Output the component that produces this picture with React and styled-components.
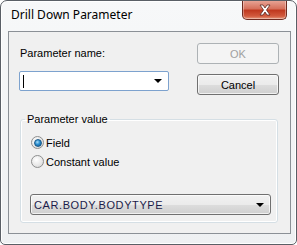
import styled, { createGlobalStyle } from 'styled-components';

const Global = createGlobalStyle`
  html, body {
    margin: 0;
    padding: 0;
    background: #ffffff;
  }
  * { box-sizing: border-box; }
`;

const Window = styled.div`
  width: 297px;
  height: 245px;
  border: 1px solid #5a5f66;
  border-radius: 7px 7px 5px 5px;
  background: linear-gradient(#f7f8f9, #eef0f2);
  box-shadow: inset 0 0 0 1px #ffffff;
  display: flex;
  flex-direction: column;
  padding: 0 6px 0 7px;
  overflow: hidden;
`;

const TitleBar = styled.div`
  height: 30px;
  display: flex;
  justify-content: space-between;
  align-items: flex-start;
`;

const Title = styled.div`
  font-family: "Noto Sans", "Open Sans", sans-serif;
  font-size: 12px;
  color: #000;
  padding: 5px 0 0 3px;
`;

const CloseButton = styled.div`
  width: 45px;
  height: 20px;
  margin-top: -1px;
  margin-right: 3px;
  border: 1px solid #6e2b20;
  border-top: none;
  border-radius: 0 0 5px 5px;
  background: linear-gradient(#e9a99b 0%, #d6715d 45%, #c0391f 55%, #d25a3d 85%, #e69a7e 100%);
  box-shadow: inset 0 0 0 1px rgba(255, 255, 255, 0.35);
  display: flex;
  align-items: center;
  justify-content: center;
`;

const Client = styled.div`
  width: 283px;
  height: 203px;
  border: 1px solid #8b9096;
  background: #f0f0f0;
  display: flex;
  flex-direction: column;
`;

const TopRow = styled.div`
  display: flex;
  justify-content: space-between;
  padding: 11px 11px 0 10px;
`;

const LeftCol = styled.div`
  display: flex;
  flex-direction: column;
  padding-top: 3px;
  gap: 10px;
`;

const RightCol = styled.div`
  display: flex;
  flex-direction: column;
  gap: 10px;
`;

const Label = styled.div`
  font-family: "Liberation Sans", Arial, sans-serif;
  font-size: 11px;
  line-height: 15px;
  color: #000;
  padding-left: 1px;
`;

const Combo = styled.div`
  width: 150px;
  height: 20px;
  border: 1px solid #7da2ce;
  border-radius: 2px;
  background: #fff;
  display: flex;
  align-items: center;
  justify-content: space-between;
  padding: 0 6px 0 3px;
`;

const Caret = styled.div`
  width: 1px;
  height: 13px;
  background: #000;
`;

const Arrow = styled.div`
  width: 0;
  height: 0;
  border-left: 4px solid transparent;
  border-right: 4px solid transparent;
  border-top: 4px solid #000;
`;

const Button = styled.div`
  width: 82px;
  height: 21px;
  border-radius: 3px;
  display: flex;
  align-items: center;
  justify-content: center;
  font-family: "Liberation Sans", Arial, sans-serif;
  font-size: 11px;
  border: 1px solid ${p => (p.$disabled ? '#adb2b5' : '#707070')};
  color: ${p => (p.$disabled ? '#a0a0a0' : '#000')};
  background: ${p =>
    p.$disabled
      ? '#f4f4f4'
      : 'linear-gradient(#f2f2f2 0%, #ebebeb 50%, #dddddd 51%, #cfcfcf 100%)'};
  box-shadow: ${p => (p.$disabled ? 'none' : 'inset 0 0 0 1px rgba(255,255,255,0.7)')};
`;

const Group = styled.fieldset`
  margin: 17px 0 0 11px;
  width: 258px;
  padding: 6px 0 7px 10px;
  border: 1px solid #d5dfe5;
  border-radius: 3px;
  box-shadow: inset 0 0 0 1px #ffffff;
`;

const Legend = styled.legend`
  font-family: "Liberation Sans", Arial, sans-serif;
  font-size: 11px;
  line-height: 15px;
  color: #000;
  padding: 0 2px;
  margin-left: -6px;
`;

const RadioRow = styled.div`
  height: 19px;
  display: flex;
  align-items: center;
  gap: 2px;
  font-family: "Liberation Sans", Arial, sans-serif;
  font-size: 11px;
  color: #000;
`;

const RadioCircle = styled.div`
  width: 13px;
  height: 13px;
  border-radius: 50%;
  border: 1px solid #8e8f8f;
  background: radial-gradient(circle at 40% 35%, #ffffff 0%, #e6e6e6 60%, #cfcfcf 100%);
  display: flex;
  align-items: center;
  justify-content: center;
`;

const RadioDot = styled.div`
  width: 8px;
  height: 8px;
  border-radius: 50%;
  background: radial-gradient(circle at 40% 35%, #a6dcf8 0%, #2a8ed0 45%, #0b4f86 100%);
  border: 1px solid #1b5a8a;
`;

const Select = styled.div`
  width: 241px;
  height: 21px;
  margin: 23px 0 0 -1px;
  border: 1px solid #707070;
  border-radius: 3px;
  background: linear-gradient(#f2f2f2 0%, #ebebeb 50%, #dddddd 51%, #cfcfcf 100%);
  box-shadow: inset 0 0 0 1px rgba(255,255,255,0.7);
  display: flex;
  align-items: center;
  justify-content: space-between;
  padding: 0 6px 0 3px;
  font-family: "Liberation Sans", Arial, sans-serif;
  font-size: 11px;
  letter-spacing: 0.6px;
  color: #1c1c4a;
`;

function CloseIcon() {
  return (
    <svg width="14" height="12" viewBox="0 0 14 12">
      <path
        d="M2 1 L5 1 L7 4 L9 1 L12 1 L8.5 6 L12 11 L9 11 L7 8 L5 11 L2 11 L5.5 6 Z"
        fill="#ffffff"
        stroke="#5a2a22"
        strokeWidth="0.8"
        strokeLinejoin="round"
      />
    </svg>
  );
}

function Radio({ checked, label }) {
  return (
    <RadioRow>
      <RadioCircle>{checked && <RadioDot />}</RadioCircle>
      <span>{label}</span>
    </RadioRow>
  );
}

export default function App() {
  return (
    <>
      <Global />
      <Window>
        <TitleBar>
          <Title>Drill Down Parameter</Title>
          <CloseButton>
            <CloseIcon />
          </CloseButton>
        </TitleBar>
        <Client>
          <TopRow>
            <LeftCol>
              <Label>Parameter name:</Label>
              <Combo>
                <Caret />
                <Arrow />
              </Combo>
            </LeftCol>
            <RightCol>
              <Button $disabled>OK</Button>
              <Button>Cancel</Button>
            </RightCol>
          </TopRow>
          <Group>
            <Legend>Parameter value</Legend>
            <Radio checked label="Field" />
            <Radio label="Constant value" />
            <Select>
              <span>CAR.BODY.BODYTYPE</span>
              <Arrow />
            </Select>
          </Group>
        </Client>
      </Window>
    </>
  );
}
